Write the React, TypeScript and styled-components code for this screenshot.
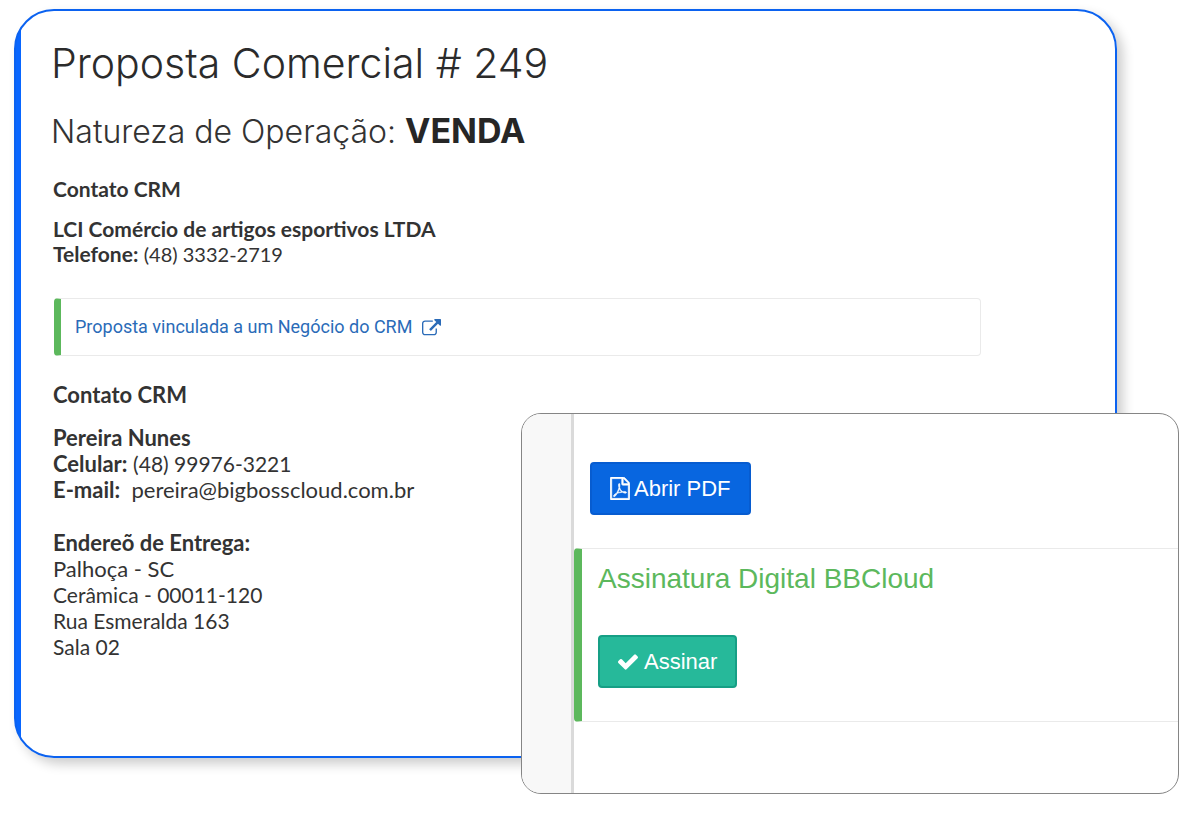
import React from "react";
import styled, { createGlobalStyle } from "styled-components";

const GlobalStyle = createGlobalStyle`
  *, *::before, *::after { box-sizing: border-box; }
  body { margin: 0; background: #fff; color: #333; font-family: Lato, "Open Sans", sans-serif; }
`;

const Stage = styled.main`
  position: relative;
  padding: 9px 83px 62px 14px;
`;

const ProposalCard = styled.article`
  overflow: hidden;
  min-height: 749px;
  padding: 24px 134px 88px 35px;
  border: 2px solid #0b62f0;
  border-radius: 40px;
  background: linear-gradient(to right, #0866ff 5px, #fff 5px) no-repeat;
  box-shadow: 6px 6px 12px rgba(0, 0, 0, 0.2);
`;

const Title = styled.h1`
  margin: 0;
  color: #2b2b2b;
  font: 300 41px/56px Inter, sans-serif;
`;

const Subtitle = styled.h2`
  margin: 17px 0 0;
  color: #333;
  font: 300 32px/48px Inter, sans-serif;

  strong { font-weight: 700; font-size: 34px; line-height: 40px; color: #262626; }
`;

const Section = styled.section<{ $gap: number; $size: number }>`
  margin-top: ${(p) => p.$gap}px;
  padding-left: 2px;
  font-size: ${(p) => p.$size}px;
`;

const SectionTitle = styled.h3`
  margin: 0;
  font-size: inherit;
  line-height: 26px;
  font-weight: 700;
`;

const Details = styled.div<{ $gap: number; $line: number }>`
  margin-top: ${(p) => p.$gap}px;
  line-height: ${(p) => p.$line}px;

  p { margin: 0; }
  strong { font-weight: 700; }
`;

const Value = styled.span<{ $size: number }>`
  font-size: ${(p) => p.$size}px;
  line-height: 20px;
`;

const Notice = styled.div`
  display: flex;
  align-items: center;
  height: 58px;
  margin: 32px 0 0 3px;
  padding-left: 14px;
  border: 1px solid #eaeaea;
  border-left: 7px solid #5cb85c;
  border-radius: 4px;
`;

const DealLink = styled.a`
  display: inline-flex;
  align-items: center;
  gap: 10px;
  color: #2a6bb8;
  font: 400 18px/24px Roboto, sans-serif;
  text-decoration: none;
`;

const SignaturePanel = styled.aside`
  position: absolute;
  top: 413px;
  left: 521px;
  right: 21px;
  display: flex;
  min-height: 381px;
  overflow: hidden;
  border: 1px solid #858585;
  border-radius: 20px;
  background: #fff;
  font-family: "Liberation Sans", Arial, sans-serif;
`;

const Gutter = styled.div`
  flex: 0 0 52px;
  border-right: 3px solid #dadada;
  background: #f8f8f8;
`;

const PanelBody = styled.div`
  flex: 1;
  padding-top: 48px;
`;

const ActionButton = styled.button<{ $fill: string; $edge: string; $gap: number }>`
  display: inline-flex;
  align-items: center;
  justify-content: center;
  gap: ${(p) => p.$gap}px;
  height: 53px;
  padding: 0 18px;
  border: 2px solid ${(p) => p.$edge};
  border-radius: 4px;
  background: ${(p) => p.$fill};
  color: #fff;
  font: 400 22px/28px "Liberation Sans", Arial, sans-serif;
  cursor: pointer;
`;

const PdfRow = styled.div`
  display: flex;
  padding-left: 16px;
`;

const SignBox = styled.section`
  height: 174px;
  margin-top: 33px;
  padding: 14px 0 0 16px;
  border: 1px solid #eaeaea;
  border-left: 8px solid #5cb85c;
  border-right: 0;
  border-radius: 4px 0 0 4px;
`;

const SignTitle = styled.h2`
  margin: 0 0 40px;
  color: #5cb85c;
  font: 400 28px/32px "Liberation Sans", Arial, sans-serif;
`;

const Icon = styled.svg`
  flex: none;
  fill: currentColor;
`;

const ExternalIcon = () => (
  <Icon width="19" height="17" viewBox="0 0 1792 1600" aria-hidden="true">
    <path d="M1408 928v320q0 119-84.500 203.500t-203.500 84.500h-832q-119 0-203.500-84.500t-84.500-203.500v-832q0-119 84.500-203.500t203.500-84.500h704q14 0 23 9t9 23v64q0 14-9 23t-23 9h-704q-66 0-113 47t-47 113v832q0 66 47 113t113 47h832q66 0 113-47t47-113v-320q0-14 9-23t23-9h64q14 0 23 9t9 23zm384-864v512q0 26-19 45t-45 19-45-19l-176-176-652 652q-10 10-23 10t-23-10l-114-114q-10-10-10-23t10-23l652-652-176-176q-19-19-19-45t19-45 45-19h512q26 0 45 19t19 45z" />
  </Icon>
);

const PdfIcon = () => (
  <Icon width="20" height="23" viewBox="128 0 1536 1792" aria-hidden="true">
    <path
      stroke="currentColor"
      strokeWidth="40"
      d="M1596 380q28 28 48 76t20 88v1152q0 40-28 68t-68 28h-1344q-40 0-68-28t-28-68v-1600q0-40 28-68t68-28h896q40 0 88 20t76 48zm-444-244v376h376q-10-29-22-41l-313-313q-12-12-41-22zm384 1528v-1024h-416q-40 0-68-28t-28-68v-416h-768v1536h1280zm-514-593q33 26 84 56 59-7 117-7 147 0 177 49 16 22 2 52 0 1-1 2l-2 2v1q-6 38-71 38-48 0-115-20t-130-53q-221 24-392 83-153 262-242 262-15 0-28-7l-24-12q-1-1-6-5-10-10-6-36 9-40 56-91.500t132-96.500q14-9 23 6 2 2 2 4 52-85 107-197 68-136 104-262-24-82-30.500-159.500t6.500-127.500q11-40 42-40h22q23 0 35 15 18 21 9 68-2 6-4 8 1 3 1 8v30q-2 123-14 192 55 164 146 238zm-576 411q52-24 137-158-51 40-87.500 84t-49.500 74zm398-920q-15 42-2 132 1-7 7-44 0-3 7-43 1-4 4-8-1-1-1-2-1-2-1-3-1-22-13-36 0 1-1 2v2zm-124 661q135-54 284-81-2-1-13-9.500t-16-13.500q-76-67-127-176-27 86-83 197-30 56-45 83zm646-16q-24-24-140-24 76 28 124 28 14 0 18-1 0-1-2-3z"
    />
  </Icon>
);

const CheckIcon = () => (
  <Icon width="20" height="16" viewBox="121 334 1550 1188" aria-hidden="true">
    <path d="M1671 566q0 40-28 68l-724 724-136 136q-28 28-68 28t-68-28l-136-136-362-362q-28-28-28-68t28-68l136-136q28-28 68-28t68 28l294 295 656-657q28-28 68-28t68 28l136 136q28 28 28 68z" />
  </Icon>
);

export default function App() {
  return (
    <>
      <GlobalStyle />
      <Stage>
        <ProposalCard>
          <Title>Proposta Comercial # 249</Title>
          <Subtitle>
            Natureza de Operação: <strong>VENDA</strong>
          </Subtitle>
          <Section $gap={20} $size={21}>
            <SectionTitle>Contato CRM</SectionTitle>
            <Details $gap={14} $line={25}>
              <p><strong>LCI Comércio de artigos esportivos LTDA</strong></p>
              <p><strong>Telefone:</strong> <Value $size={20}>(48) 3332-2719</Value></p>
            </Details>
          </Section>
          <Notice>
            <DealLink href="#negocio">
              Proposta vinculada a um Negócio do CRM
              <ExternalIcon />
            </DealLink>
          </Notice>
          <Section $gap={26} $size={22}>
            <SectionTitle>Contato CRM</SectionTitle>
            <Details $gap={17} $line={26}>
              <p><strong>Pereira Nunes</strong></p>
              <p><strong>Celular:</strong> <Value $size={21}>(48) 99976-3221</Value></p>
              <p><strong>E-mail:</strong>&nbsp; <Value $size={22}>pereira@bigbosscloud.com.br</Value></p>
            </Details>
            <Details $gap={27} $line={26}>
              <p><strong>Endereõ de Entrega:</strong></p>
              <p><Value $size={22}>Palhoça - SC</Value></p>
              <p><Value $size={21}>Cerâmica - 00011-120</Value></p>
              <p><Value $size={21}>Rua Esmeralda 163</Value></p>
              <p><Value $size={21}>Sala 02</Value></p>
            </Details>
          </Section>
        </ProposalCard>
        <SignaturePanel>
          <Gutter />
          <PanelBody>
            <PdfRow>
              <ActionButton type="button" $fill="#0866e0" $edge="#075cd0" $gap={4}>
                <PdfIcon />
                Abrir PDF
              </ActionButton>
            </PdfRow>
            <SignBox>
              <SignTitle>Assinatura Digital BBCloud</SignTitle>
              <ActionButton type="button" $fill="#26b99a" $edge="#169f85" $gap={6}>
                <CheckIcon />
                Assinar
              </ActionButton>
            </SignBox>
          </PanelBody>
        </SignaturePanel>
      </Stage>
    </>
  );
}
